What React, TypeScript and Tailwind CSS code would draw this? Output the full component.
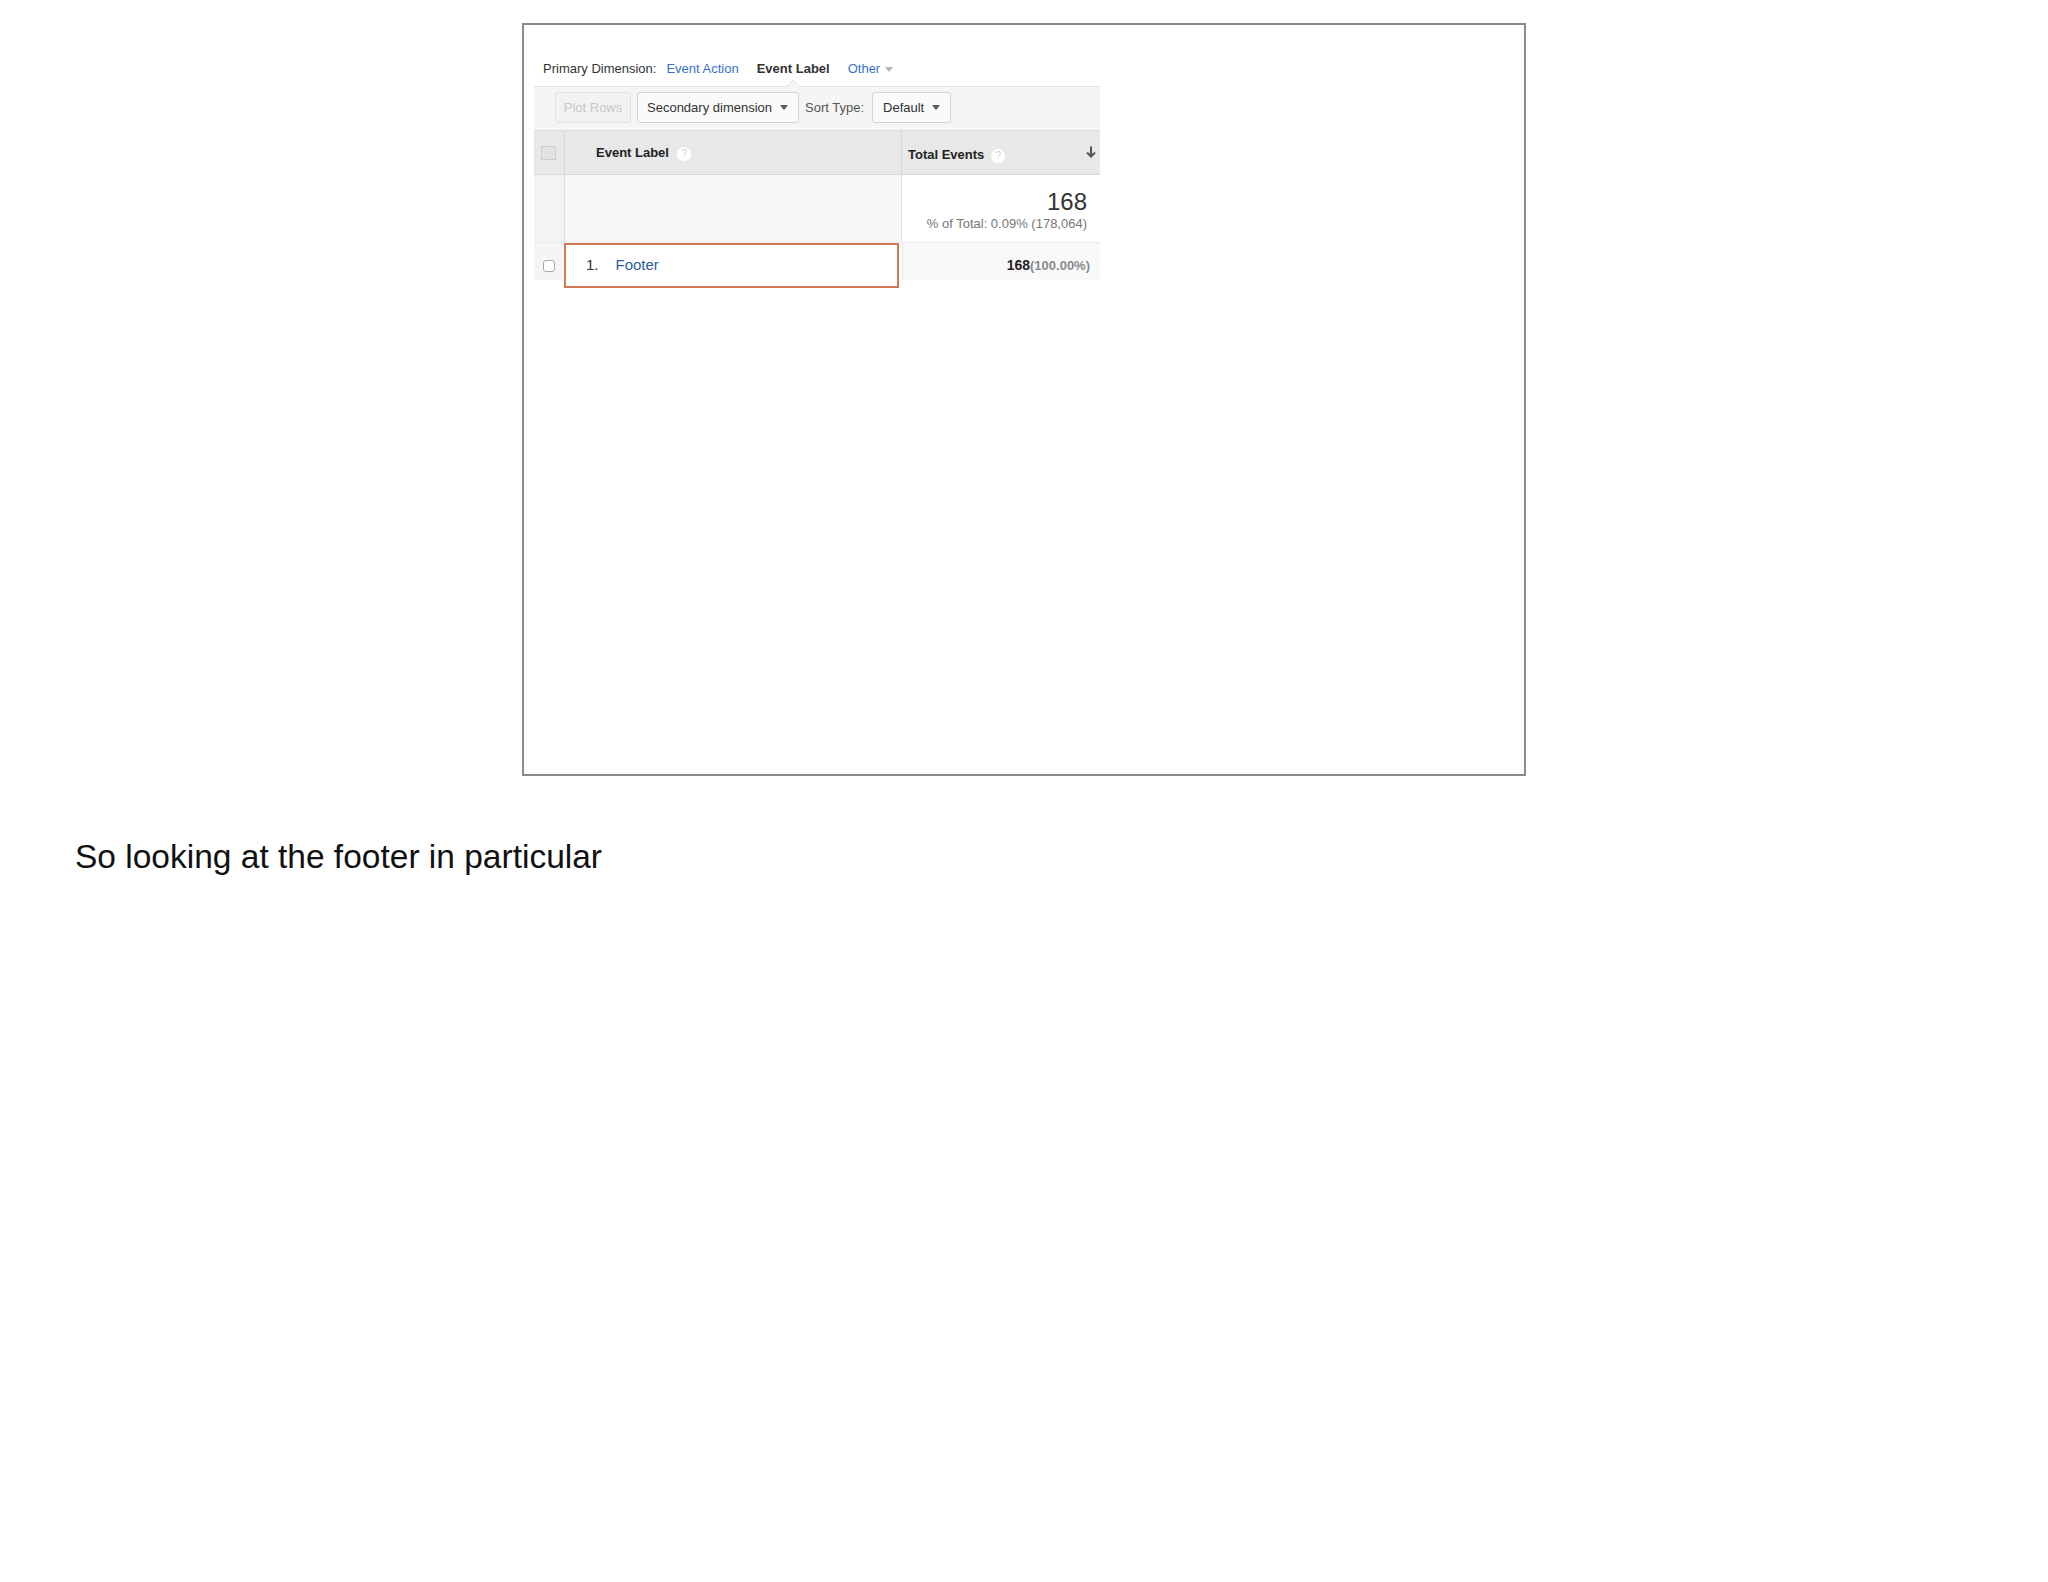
import { ReactNode } from "react";

function Caret({ color = "#555" }: { color?: string }) {
  return (
    <svg width="8" height="5" viewBox="0 0 8 5" className="shrink-0">
      <polygon points="0,0 8,0 4,5" fill={color} />
    </svg>
  );
}

function Help() {
  return (
    <span className="inline-flex w-[14px] h-[14px] rounded-full bg-white items-center justify-center text-[10px] leading-none text-[#cfcfcf] font-normal">
      ?
    </span>
  );
}

function Button({ children, className = "" }: { children: ReactNode; className?: string }) {
  return (
    <div className={`h-[31px] flex items-center rounded-[3px] border text-[13px] ${className}`}>
      {children}
    </div>
  );
}

export default function App() {
  return (
    <div className="min-h-[1582px] bg-white font-['Liberation_Sans',Arial,sans-serif]">
      <div className="pl-[522px] pt-[23px]">
        <div className="w-[1004px] h-[753px] border-2 border-[#8a8a8a] pl-[10px] pt-[36px]">
          {/* Primary dimension tabs */}
          <div className="flex items-center h-4 text-[13px] leading-4 pl-[9px]">
            <span className="text-[#333]">Primary Dimension:</span>
            <span className="ml-[10px] text-[#3b6fcc]">Event Action</span>
            <span className="ml-[18px] font-bold text-[#333]">Event Label</span>
            <span className="ml-[18px] text-[#3b6fcc]">Other</span>
            <span className="ml-[5px]">
              <Caret color="#b5b5b5" />
            </span>
          </div>

          <div className="w-[566px] mt-[9px]">
            {/* Toolbar */}
            <div className="relative h-[44px] bg-[#f5f5f5] border-t border-[#e3e3e3] flex items-start pt-[5px] pl-[21px]">
              <svg width="14" height="8" viewBox="0 0 14 8" className="absolute left-[252px] -top-[8px]">
                <polygon points="0,8 7,1 14,8" fill="#f5f5f5" />
                <polyline points="0,8 7,1 14,8" fill="none" stroke="#e0e0e0" strokeWidth="1" />
              </svg>
              <Button className="w-[76px] justify-center bg-[#f2f2f2] border-[#e2e2e2] text-[#c8c8c8]">
                Plot Rows
              </Button>
              <Button className="ml-[6px] w-[162px] justify-between pl-[9px] pr-[10px] bg-[#fafafa] border-[#d3d3d3] text-[#333]">
                <span>Secondary dimension</span>
                <Caret />
              </Button>
              <span className="ml-[6px] h-[31px] flex items-center text-[13px] text-[#555]">Sort Type:</span>
              <Button className="ml-[8px] w-[79px] justify-between pl-[10px] pr-[10px] bg-[#fafafa] border-[#d3d3d3] text-[#333]">
                <span>Default</span>
                <Caret />
              </Button>
            </div>

            {/* Header */}
            <div className="grid grid-cols-[31px_337px_198px] h-[45px] bg-[#e8e8e8] border-t border-[#dcdcdc] border-b border-b-[#d8d8d8]">
              <div className="border-r border-[#d6d6d6] flex items-center pl-[7px]">
                <div className="w-[15px] h-[14px] bg-[#e2e2e2] border border-[#cdcdcd]" />
              </div>
              <div className="border-r border-[#d6d6d6] flex items-center pl-[31px] text-[13px] font-bold text-[#222]">
                <span>Event Label</span>
                <span className="ml-[8px]">
                  <Help />
                </span>
              </div>
              <div className="flex items-center pl-[6px] pr-[4px] pt-1 text-[13px] font-bold text-[#222]">
                <span>Total Events</span>
                <span className="ml-[7px]">
                  <Help />
                </span>
                <svg width="10" height="12" viewBox="0 0 10 12" className="ml-auto -mt-[5px]">
                  <path d="M5 0.5 V10.5 M1 6.5 L5 10.5 L9 6.5" fill="none" stroke="#555" strokeWidth="2" />
                </svg>
              </div>
            </div>

            {/* Summary row */}
            <div className="grid grid-cols-[31px_337px_198px] h-[68px] border-b border-[#ebebeb]">
              <div className="bg-[#f3f3f3] border-r border-[#dedede]" />
              <div className="bg-[#f7f7f7] border-r border-[#dedede]" />
              <div className="flex flex-col items-end pr-[13px] pt-[13px] bg-white">
                <span className="text-[24px] leading-[28px] text-[#333]">168</span>
                <span className="text-[13px] leading-4 text-[#777]">% of Total: 0.09% (178,064)</span>
              </div>
            </div>

            {/* Data row */}
            <div className="relative grid grid-cols-[31px_337px_198px] h-[37px]">
              <div className="bg-[#f5f5f5] pl-[9px] pt-[17px]">
                <div className="w-[12px] h-[12px] rounded-[3px] border border-[#a8a8a8] bg-white" />
              </div>
              <div className="bg-white flex items-start pl-[21px] pt-[13px] text-[15px] leading-[18px]">
                <span className="text-[#333]">1.</span>
                <span className="ml-[17px] text-[#2d5c9f]">Footer</span>
              </div>
              <div className="bg-[#f9f9f9] border-l border-[#e6e6e6] flex items-baseline justify-end pr-[10px] pt-[13px] leading-[18px] font-bold">
                <span className="text-[14px] text-[#222]">168</span>
                <span className="text-[13px] text-[#8a8a8a]">(100.00%)</span>
              </div>
              <div className="absolute left-[30px] top-0 w-[335px] h-[45px] border-2 border-[#d07a55]" />
            </div>
          </div>
        </div>
      </div>

      <p className="mt-[62px] pl-[75px] text-[33.5px] leading-[38px] text-[#111]">
        So looking at the footer in particular
      </p>
    </div>
  );
}
